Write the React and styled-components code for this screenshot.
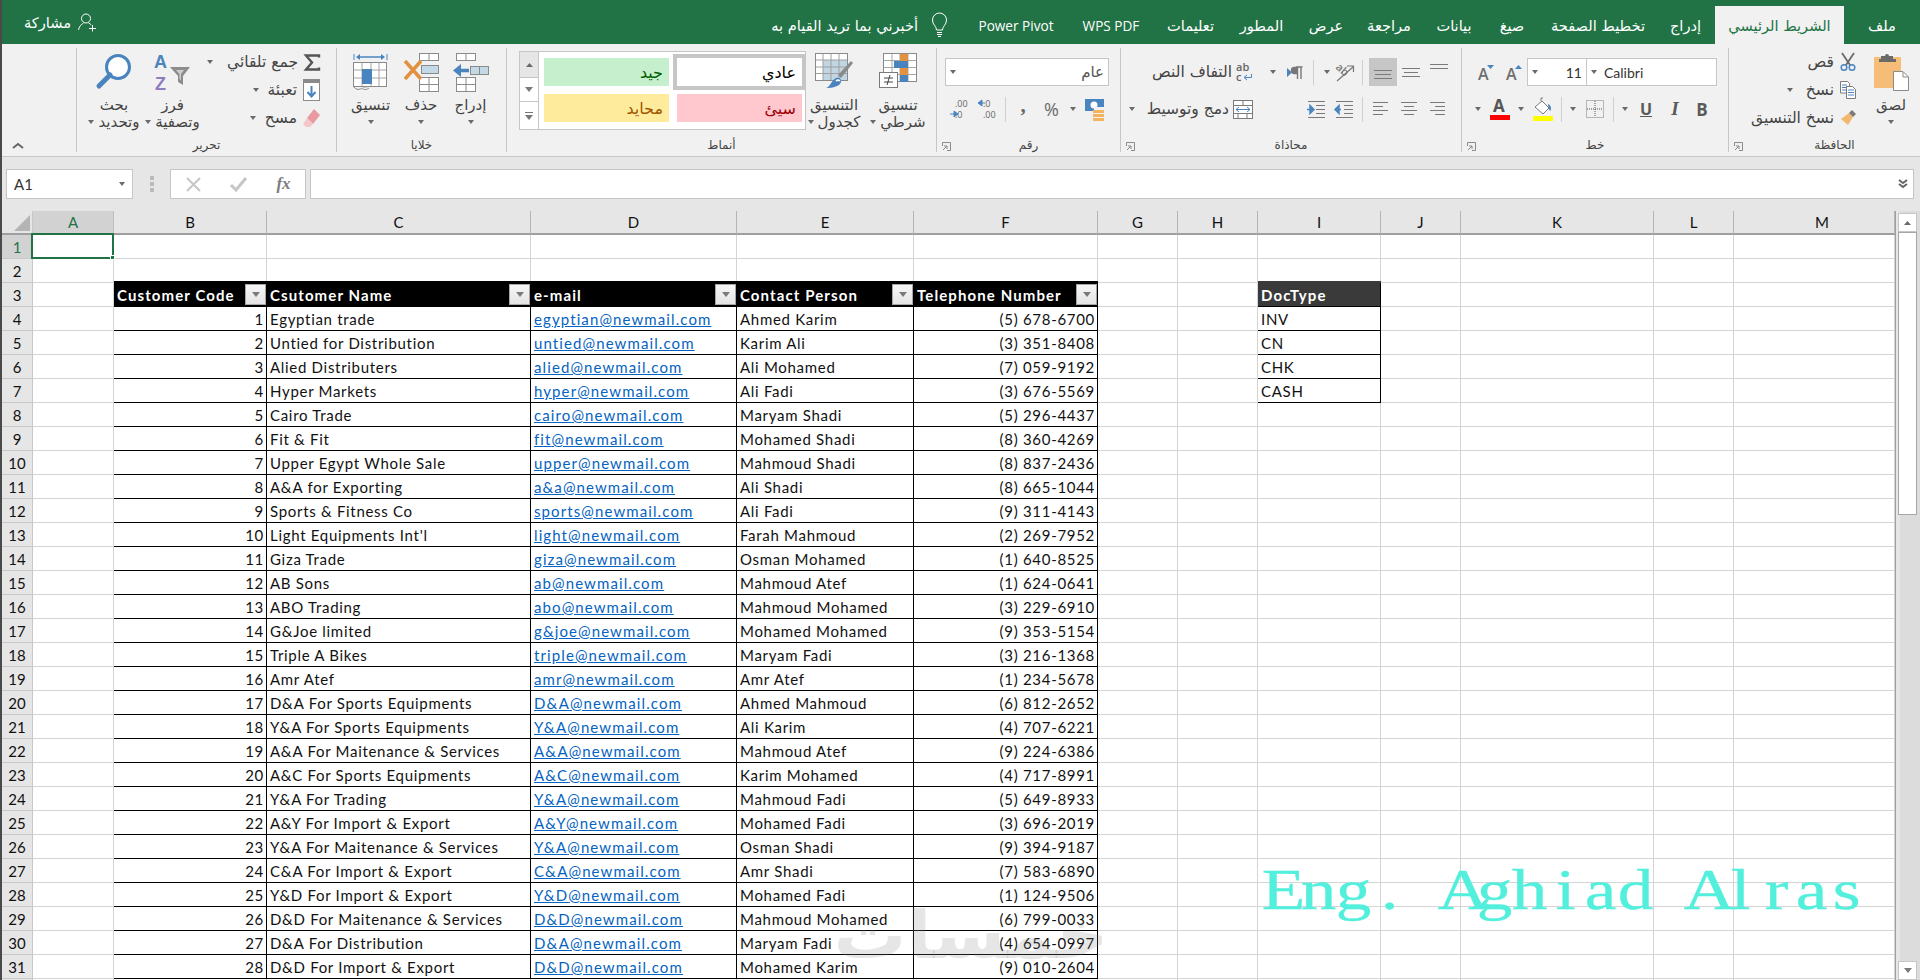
import React from 'react';
import styled, { createGlobalStyle } from 'styled-components';

const Global = createGlobalStyle`
  html, body { margin: 0; padding: 0; height: 100%; overflow: hidden; }
  body { background: #444; font-family: "Open Sans", "DejaVu Sans", sans-serif; }
  #root { height: 980px; overflow: hidden; }
  svg { overflow: visible; }
`;

const AR = '"DejaVu Sans", "Open Sans", sans-serif';
const CELLFONT = 'Lato, "Open Sans", sans-serif';
const BLUE = '#4a84bf';
const ORANGE = '#e2913f';

const Page = styled.div`
  position: relative; width: 1920px; height: 980px; padding-left: 2px; box-sizing: border-box;
  background: #4a4a4a; overflow: hidden; display: flex; flex-direction: column;
`;
const TitleBar = styled.div`
  height: 44px; background: #217346; display: flex; flex-direction: row-reverse; align-items: flex-end; flex: none;
`;
const Tab = styled.div`
  width: ${p => p.$w}px; height: 38px; display: flex; align-items: center; justify-content: center; white-space: nowrap;
  font-size: ${p => (p.$latin ? 13.6 : 14.6)}px; font-family: ${p => (p.$latin ? '"Open Sans", sans-serif' : AR)};
  color: ${p => (p.$active ? '#217346' : '#fff')}; background: ${p => (p.$active ? '#f1f1f1' : 'transparent')};
`;
const TellMe = styled.div`
  height: 38px; display: flex; align-items: center; gap: 13px; padding-right: 18px;
  color: #fff; font-size: 14.6px; font-family: ${AR};
`;
const Share = styled.div`
  margin-right: auto; height: 44px; padding-left: 22px; display: flex; align-items: center; gap: 7px;
  color: #fff; font-size: 14.6px; font-family: ${AR};
`;
const Ribbon = styled.div`
  flex: none; height: 113px; box-sizing: border-box; padding: 4px 0 0; display: flex; background: #f1f1f1;
  border-bottom: 1px solid #c8c8c8;
`;
const Collapse = styled.div`
  width: 74px; height: 104px; display: flex; align-items: flex-end; padding: 0 0 3px 10px; box-sizing: border-box;
`;
const Group = styled.div`
  position: relative; width: ${p => p.$w}px; height: 104px; box-sizing: border-box; flex: none;
  border-left: 1px solid #c6c6c6; display: flex; flex-direction: column;
`;
const GroupBody = styled.div`
  height: 90px; display: flex; padding-left: ${p => p.$pl || 0}px; box-sizing: border-box;
`;
const GroupLabel = styled.div`
  height: 14px; line-height: 14px; text-align: center; font-size: 12px; font-family: ${AR}; color: #444;
  padding-left: ${p => p.$pl || 0}px;
`;
const Launcher = styled.span`
  position: absolute; left: 5px; bottom: 1px; width: 9px; height: 9px; display: flex;
`;
const BigButton = styled.div`
  width: ${p => p.$w}px; flex: none; display: flex; flex-direction: column; align-items: center; padding-top: 5px; box-sizing: border-box;
`;
const BigIcon = styled.div`
  height: 43px; display: flex; align-items: flex-start; justify-content: center;
`;
const BigLine = styled.div`
  height: 17px; display: flex; align-items: center; justify-content: center; gap: 4px; white-space: nowrap;
  font-size: 15px; font-family: ${AR}; color: #444;
`;
const SmallCol = styled.div`
  flex: 1; display: flex; flex-direction: column; padding-right: ${p => p.$pr || 0}px;
`;
const SmallRow = styled.div`
  height: 28px; display: flex; align-items: center; justify-content: flex-end; gap: 6px; white-space: nowrap;
  font-size: 15.5px; font-family: ${AR}; color: #444;
`;
const AlignTextRow = styled(SmallRow)`
  height: ${p => (p.$second ? 22 : 28)}px; margin-top: ${p => (p.$second ? 12 : 0)}px; padding-right: 9px; gap: 4px;
`;
const Caret = styled.span`
  flex: none; width: 0; height: 0; margin-right: ${p => p.$mr || 0}px;
  border-left: 3.5px solid transparent; border-right: 3.5px solid transparent; border-top: 4px solid #6a6a6a;
`;
const TwoRows = styled.div`
  display: flex; flex-direction: column; padding-top: 10px; box-sizing: border-box; width: ${p => (p.$w ? p.$w + 'px' : 'auto')};
`;
const Row28 = styled.div`
  height: 28px; display: flex; align-items: center;
`;
const Row22 = styled.div`
  height: 22px; margin-top: 12px; display: flex; align-items: center;
`;
const Tool = styled.div`
  width: ${p => p.$w}px; height: ${p => (p.$on ? 28 : 22)}px; flex: none; display: flex; align-items: center; justify-content: center;
  background: ${p => (p.$on ? '#c6c6c6' : 'transparent')};
  font-family: "Liberation Sans", sans-serif; color: #5c5c5c;
`;
const Sep = styled.span`
  width: 1px; height: 25px; background: #d0d0d0; display: block;
`;
const LetterB = styled.span`
  font: bold 17px "Open Sans", sans-serif; color: #5a5a5a;
`;
const LetterI = styled(LetterB)`
  font-style: italic; font-family: "Liberation Serif", serif; font-size: 19px;
`;
const LetterU = styled(LetterB)`
  text-decoration: underline; font-size: 16px;
`;
const Percent = styled.span`
  font: 18px "Open Sans", sans-serif; color: #6a6a6a;
`;
const Comma = styled.span`
  font: bold 21px "Liberation Serif", serif; color: #6a6a6a; margin-top: -8px;
`;
const Combo = styled.div`
  width: ${p => p.$w}px; height: 28px; box-sizing: border-box; flex: none; background: #fff; border: 1px solid #c6c6c6;
  margin-left: ${p => p.$ml || 0}px; display: flex; align-items: center; padding: 0 4px 0 4px;
  font: 13.5px ${CELLFONT}; color: #333;
`;
const ComboText = styled.span`
  margin-left: ${p => (p.$end ? 'auto' : '7px')}; font-family: ${p => (p.$ar ? AR : CELLFONT)}; font-size: ${p => (p.$ar ? 15 : 14)}px;
  color: ${p => (p.$ar ? '#555' : '#333')};
`;
const Gallery = styled.div`
  width: 287px; height: 79px; margin-top: 3px; flex: none; box-sizing: border-box; background: #fff; border: 1px solid #c6c6c6; display: flex;
`;
const GalleryScroll = styled.div`
  width: 18px; flex: none; display: flex; flex-direction: column; border-right: 1px solid #c6c6c6;
`;
const GalleryBtn = styled.div`
  flex: ${p => p.$f}; display: flex; align-items: center; justify-content: center;
  background: ${p => (p.$dim ? '#e6e6e6' : '#fff')}; border-bottom: ${p => (p.$last ? 0 : 1)}px solid #c6c6c6;
`;
const StyleGrid = styled.div`
  display: grid; grid-template-columns: 125px 125px; grid-template-rows: 28px 28px; gap: 8px; padding: 6px 0 0 5px;
`;
const StyleCell = styled.div`
  background: ${p => p.$bg}; color: ${p => p.$fg}; font-size: 16px; font-family: ${AR};
  display: flex; align-items: center; justify-content: flex-end; padding-right: 6px;
  box-shadow: ${p => (p.$sel ? '0 0 0 4px #c6c6c6' : 'none')};
`;
const FormulaArea = styled.div`
  flex: none; height: 54px; background: #e6e6e6; display: flex; align-items: flex-start; padding: 12px 6px 0 4px; box-sizing: border-box;
`;
const NameBox = styled.div`
  width: 127px; height: 30px; box-sizing: border-box; background: #fff; border: 1px solid #c6c6c6; display: flex; align-items: center;
  justify-content: space-between; padding: 0 7px; font: 15px ${CELLFONT}; color: #333; flex: none;
`;
const Grip = styled.div`
  width: 37px; height: 30px; flex: none; display: flex; align-items: center; justify-content: center;
`;
const FxBox = styled.div`
  width: 136px; height: 30px; box-sizing: border-box; background: #fff; border: 1px solid #c6c6c6; flex: none; display: grid;
  grid-template-columns: repeat(3, 45px); align-items: center; justify-items: center;
`;
const FxText = styled.i`
  font: italic bold 17px "Liberation Serif", serif; color: #7d7d7d;
`;
const FormulaInput = styled.div`
  flex: 1; height: 30px; margin-left: 4px; box-sizing: border-box; background: #fff; border: 1px solid #c6c6c6;
  display: flex; align-items: center; justify-content: flex-end; padding-right: 5px;
`;
const SheetArea = styled.div`
  flex: 1; display: flex; min-height: 0; overflow: hidden;
`;
const Sheet = styled.div`
  width: 1893px; flex: none; display: grid; background: #fff; align-content: start;
  grid-template-columns: 31px 81px 153px 264px 206px 177px 184px 80px 80px 123px 80px 193px 80px 161px;
  grid-template-rows: 24px repeat(32, 24px); font: 15px ${CELLFONT}; letter-spacing: .7px; color: #111;
`;
const ColHead = styled.div`
  background: ${p => (p.$active ? '#d2d2d2' : '#e6e6e6')}; color: ${p => (p.$active ? '#217346' : '#111')};
  box-sizing: border-box; border-bottom: 2px solid #9f9f9f; border-right: 1px solid ${p => (p.$active ? '#c0c0c0' : '#b5b5b5')};
  display: flex; align-items: center; justify-content: center; font-size: 15px; padding-bottom: 1px; letter-spacing: 0;
  padding-left: ${p => p.$shift || 0}px;
`;
const Corner = styled(ColHead)`
  align-items: flex-end; justify-content: flex-end; padding: 0 2px 2px 0; border-right: 1px solid #c8c8c8;
`;
const RowHead = styled.div`
  background: ${p => (p.$active ? '#d2d2d2' : '#e6e6e6')}; color: ${p => (p.$active ? '#217346' : '#111')};
  box-sizing: border-box; border-bottom: 1px solid #c8c8c8; border-right: 1px solid #c8c8c8;
  display: flex; align-items: center; justify-content: center; font-size: 15px; letter-spacing: 0;
`;
const Cell = styled.div`
  position: relative; box-sizing: border-box; border-bottom: 1px solid #d4d4d4; border-right: 1px solid #d4d4d4;
`;
const Selection = styled.div`
  position: absolute; left: -2px; top: -2px; right: -1px; bottom: -1px; border: 2px solid #217346; z-index: 2;
  &::after { content: ''; position: absolute; right: -3px; bottom: -3px; width: 5px; height: 5px; background: #217346; border: 1px solid #fff; box-sizing: border-box; }
`;
const TableHead = styled.div`
  position: relative; box-sizing: border-box; background: ${p => p.$bg || '#000'}; color: #fff; font-weight: 700; letter-spacing: 1.1px;
  box-shadow: 0 -2px 0 ${p => p.$bg || '#000'}; display: flex; align-items: center; padding-left: 3px; white-space: nowrap;
  border: ${p => (p.$bg ? '1px solid #000' : 0)}; border-width: ${p => (p.$bg ? '0 1px 1px 0' : 0)};
`;
const FilterBtn = styled.span`
  position: absolute; right: 1px; top: 1px; width: 21px; height: 21px; box-sizing: border-box; background: linear-gradient(#f6f6f6, #e4e4e4);
  border: 1px solid #a6a6a6; display: flex; align-items: center; justify-content: center;
`;
const TableCell = styled.div`
  box-sizing: border-box; border-bottom: 1px solid #000; border-right: 1px solid #000; background: #fff;
  box-shadow: ${p => (p.$first ? '-1px 0 0 #000' : 'none')};
  display: flex; align-items: center; justify-content: ${p => (p.$right ? 'flex-end' : 'flex-start')}; padding: 0 2px 0 3px; white-space: nowrap;
`;
const Email = styled.a`
  color: #0563c1; text-decoration: underline; letter-spacing: 1.1px;
`;
const Scrollbar = styled.div`
  flex: 1; background: #dcdcdc; display: flex; flex-direction: column; align-items: center; padding: 2px 1px 0 0; box-sizing: border-box;
  box-shadow: inset 4px 0 0 #e6e6e6; border-left: 1px solid #9f9f9f; height: 100%;
`;
const ScrollBtn = styled.div`
  width: 19px; height: 19px; box-sizing: border-box; background: #fff; border: 1px solid #c6c6c6; flex: none; display: flex; align-items: center; justify-content: center;
  margin-top: ${p => (p.$auto ? 'auto' : 0)};
`;
const ScrollThumb = styled.div`
  width: 19px; height: 283px; box-sizing: border-box; background: #fff; border: 1px solid #a6a6a6; flex: none;
`;
const Signature = styled.div`
  position: absolute; left: 1266px; top: 857px; display: flex; color: #52efdc; font: 57px "Liberation Serif", serif; pointer-events: none; z-index: 3;
  -webkit-text-stroke: .3px #52efdc;
`;
const SigChar = styled.span`
  width: 35.2px; text-align: center; flex: none; display: inline-block; transform: scaleX(1.25);
`;
const Watermark = styled.div`
  position: absolute; left: 845px; top: 896px; width: 228px; text-align: center; pointer-events: none; z-index: 3;
  font: bold 66px ${AR}; color: rgba(130,130,130,.2); line-height: 80px; transform: scaleX(1.1);
`;

/* ---------- icons ---------- */
const Up = () => <svg width="7" height="4"><path d="M0 4L3.5 0 7 4z" fill="#6a6a6a" /></svg>;
const DownSmall = () => <svg width="8" height="5"><path d="M0 0L4 5 8 0z" fill="#7a7a7a" /></svg>;
const LauncherIcon = () => (
  <svg width="9" height="9" viewBox="0 0 9 9" fill="none" stroke="#8a8a8a"><path d="M.5 4V.5H8.5V8.5H5M1 8L5 4M2 4h3v3" /></svg>
);
const ShareIcon = () => (
  <svg width="19" height="19" viewBox="0 0 19 19" fill="none" stroke="#fff"><circle cx="8" cy="5.5" r="4.5" /><path d="M.5 17c1-5 4-6 5-7M10.5 10c1 .4 2 1 2.8 2M14.5 12v6.5M11 15.5h7" /></svg>
);
const Bulb = () => (
  <svg width="17" height="24" viewBox="0 0 17 24" fill="none" stroke="#fff"><path d="M5.5 17c0-4-4-5-4-10a7 7 0 0114 0c0 5-4 6-4 10zM6 19.5h5M6 21.5h5M7 23.5h3" /></svg>
);
const Search = () => (
  <svg width="36" height="36" viewBox="0 0 36 36" fill="none"><circle cx="22" cy="14" r="11.5" fill="#fff" stroke={BLUE} strokeWidth="3" /><path d="M14 22L3 33" stroke={BLUE} strokeWidth="5" strokeLinecap="round" /></svg>
);
const SortIcon = () => (
  <svg width="37" height="40" viewBox="0 0 37 40"><text x="0" y="15" fontFamily="Liberation Sans" fontWeight="bold" fontSize="18" fill={BLUE}>A</text><text x="1" y="37" fontFamily="Liberation Sans" fontWeight="bold" fontSize="18" fill="#8f7cc0">Z</text><path d="M16 14H36L29 23V32L24 29V23Z" fill="#8d8d8d" /><path d="M22 17H30L27 21V27L25.500 26V21Z" fill="#cfcfcf" /></svg>
);
const Sigma = () => (
  <svg width="16" height="17" viewBox="0 0 16 17" fill="none" stroke="#555" strokeWidth="2.400"><path d="M15 3.500V1.500H2L8 8.500 2 15.500H15V13.500" /></svg>
);
const FillIcon = () => (
  <svg width="17" height="22" viewBox="0 0 17 22"><rect x=".5" y=".5" width="16" height="21" fill="#fff" stroke="#8a8a8a" /><rect x="1" y="1" width="15" height="3" fill="#8a8a8a" /><path d="M8.500 7v9M4.500 13l4 4.500 4-4.500" fill="none" stroke={BLUE} strokeWidth="2" /></svg>
);
const Eraser = () => (
  <svg width="17" height="19" viewBox="0 0 17 19"><path d="M11 0l6 6-7 9-6-6z" fill="#e99aa0" /><path d="M4 9l6 6-3 3-4 0-3-3z" fill="#f4c8cb" /></svg>
);
const box = '#8a8a8a';
const FormatIcon = () => (
  <svg width="36" height="38" viewBox="0 0 36 38" fill="none">
    <path d="M1 1v6M34 1v6" stroke={BLUE} /><path d="M5 4H30" stroke={BLUE} strokeWidth="1.500" /><path d="M3 4l4-3v6zM32 4l-4-3v6z" fill={BLUE} />
    <rect x=".5" y="9.500" width="33" height="24" fill="#fff" stroke={box} />
    <path d="M9 10V33M18 10V33M26 10V33M1 17H33M1 25H33" stroke="#a5a5a5" />
    <rect x="9" y="16" width="10" height="15" fill={BLUE} />
    <path d="M1 34c2 3 6 3 8 1 1 2 5 2 7 0M10 34l6-.5" stroke="#8a8a8a" />
  </svg>
);
const DeleteIcon = () => (
  <svg width="36" height="38" viewBox="0 0 36 38" fill="none" stroke={box}>
    <rect x="16.500" y=".5" width="19" height="7" fill="#fff" />
    <path d="M26 1V7" /><rect x="18.500" y="12.500" width="17" height="8" fill="#c3d9e6" />
    <rect x="16.500" y="24.500" width="19" height="14" fill="#fff" /><path d="M26 25V38M17 31.500H35" />
    <path d="M2 8L18 26M18 8L2 26" stroke={ORANGE} strokeWidth="3.500" />
  </svg>
);
const InsertIcon = () => (
  <svg width="36" height="38" viewBox="0 0 36 38" fill="none" stroke={box}>
    <rect x="3.500" y=".5" width="19" height="7" fill="#fff" /><path d="M13 1V7" />
    <rect x="17.500" y="13.500" width="18" height="8" fill="#c3d9e6" /><path d="M26.500 14V21" />
    <rect x="3.500" y="24.500" width="19" height="14" fill="#fff" /><path d="M13 25V38M4 31.500H22" />
    <path d="M16 17.500H6" stroke={BLUE} strokeWidth="3.500" /><path d="M0 17.500L8 11V24Z" fill={BLUE} stroke="none" />
  </svg>
);
const CondIcon = () => (
  <svg width="38" height="36" viewBox="0 0 38 36" fill="none">
    <rect x="4.500" y=".5" width="33" height="28" fill="#fff" stroke={box} />
    <path d="M13 1V28M21 1V28M29 1V28M5 7.500H37M5 14.500H37M5 21.500H37" stroke="#a5a5a5" />
    <rect x="21" y="1" width="8" height="7" fill={ORANGE} /><rect x="15" y="8" width="14" height="7" fill={BLUE} /><rect x="21" y="15" width="8" height="7" fill={ORANGE} /><rect x="21" y="22" width="8" height="7" fill={BLUE} />
    <rect x=".5" y="19.500" width="18" height="15" fill="#fff" stroke="#7a7a7a" /><path d="M5 25H14M5 29H14M11 22L8 32" stroke="#444" />
  </svg>
);
const TableFmtIcon = () => (
  <svg width="38" height="36" viewBox="0 0 38 36" fill="none">
    <rect x=".5" y=".5" width="32" height="27" fill="#fff" stroke={box} />
    <rect x="8" y="7" width="24" height="20" fill="#c0d6e2" />
    <path d="M8 1V27M16 1V27M24 1V27M1 7H32M1 14H32M1 20.500H32" stroke="#a0a0a0" />
    <path d="M23 22L36 8l2 2-12 15z" fill="#8a8a8a" />
    <path d="M11 35c4-1 5-7 10-10 3-1 6 1 5 4-1 4-8 6-15 6z" fill={BLUE} /><path d="M21 28a3 3 0 014 0" stroke="#fff" strokeWidth="1.500" />
  </svg>
);
const Lines = ({ rows, w = 18, h = 18, color = '#7a7a7a' }) => (
  <svg width={w} height={h} viewBox={`0 0 ${w} ${h}`} fill="none" stroke={color}>
    {rows.map(([a, b, y], i) => <path key={i} d={`M${a} ${y}.5H${b}`} />)}
  </svg>
);
const IndentIcon = ({ flip }) => (
  <svg width="19" height="17" viewBox="0 0 19 17" fill="none" stroke="#7a7a7a">
    <path d="M1 .5H18M9 4.500H18M9 8.500H18M9 12.500H18M1 16.500H18" />
    {flip ? <path d="M6 8.500H2M0 8.500L4 4.500V12.500Z" fill={BLUE} stroke={BLUE} strokeWidth="1.500" /> : <path d="M0 8.500H5M7 8.500L3 4.500V12.500Z" fill={BLUE} stroke={BLUE} strokeWidth="1.500" />}
  </svg>
);
const ParaIcon = () => (
  <svg width="16" height="13" viewBox="0 0 16 13"><path d="M0 2L5 6.500 0 11z" fill={BLUE} /><path d="M10.500 1.500H7.500a3 3 0 000 6h3M10.500 1V13M14 1V13M9 1H15.500" fill="#777" stroke="#777" strokeWidth="1.400" /></svg>
);
const Orient = () => (
  <svg width="20" height="20" viewBox="0 0 20 20" fill="none"><text x="1" y="10" transform="rotate(40 6 8)" fontFamily="Open Sans" fontSize="11" fontWeight="600" fill="#777">ab</text><path d="M3 19L19 5M13 4h6.500v6" stroke="#777" strokeWidth="1.200" /></svg>
);
const WrapIcon = () => (
  <svg width="17" height="20" viewBox="0 0 17 20" fill="none"><text x="0" y="9" fontFamily="Open Sans" fontWeight="600" fontSize="11" fill="#666">ab</text><text x="0" y="19" fontFamily="Open Sans" fontWeight="600" fontSize="11" fill="#666">c</text><path d="M15.500 12v3.500H9M11 13l-3 2.500 3 2.500" stroke={BLUE} /></svg>
);
const MergeIcon = () => (
  <svg width="20" height="19" viewBox="0 0 20 19" fill="none"><rect x=".5" y=".5" width="19" height="18" fill="#fff" stroke="#7a7a7a" /><path d="M1 5.500H19M1 13.500H19M10 1V5M5 14V18M14 14V18" stroke="#7a7a7a" /><path d="M3 9.500H17M6 7L3 9.500 6 12M14 7L17 9.500 14 12" stroke={BLUE} /></svg>
);
const AccIcon = () => (
  <svg width="20" height="23" viewBox="0 0 20 23"><rect x="0" y="1" width="19" height="12" fill={BLUE} /><circle cx="9" cy="7" r="3.500" fill="#fff" /><rect x="9" y="9" width="10" height="4" fill="#f1f1f1" /><path d="M8 12h11v3H8zM8 16h11v3H8zM8 20h11v3H8z" fill="#f2b460" /></svg>
);
const DecIcon = ({ more }) => (
  <svg width="18" height="22" viewBox="0 0 18 22">
    <text x="5" y="9" fontFamily="Open Sans" fontSize="9" fill="#666">{more ? '.00' : '.0'}</text>
    <text x="5" y="20" fontFamily="Open Sans" fontSize="9" fill="#666">{more ? '.0' : '.00'}</text>
    <path d={more ? 'M0 16H6M8 16L4 13V19Z' : 'M1 5H7M0 5L4 2V8Z'} fill={BLUE} stroke={BLUE} />
  </svg>
);
const AGrow = ({ down }) => (
  <svg width="16" height="17" viewBox="0 0 16 17"><text x="0" y="16" fontFamily="Open Sans" fontWeight="600" fontSize="16" fill="#6e6e6e">A</text><path d={down ? 'M9 1H16L12.500 5Z' : 'M9 5L12.500 1 16 5Z'} fill={BLUE} /></svg>
);
const FontColor = () => (
  <svg width="20" height="22" viewBox="0 0 20 22"><text x="3" y="14" fontFamily="Open Sans" fontWeight="700" fontSize="17" fill="#555">A</text><rect y="17" width="20" height="5" fill="#f00" /></svg>
);
const FillColor = () => (
  <svg width="20" height="23" viewBox="0 0 20 23" fill="none"><path d="M2 9L9 3l7 7-6 6z" fill="#fff" stroke="#7a7a7a" /><path d="M8 3V0h2" stroke="#7a7a7a" /><path d="M15 6c3 1 4 5 2 7-1-2-2-4-2-7z" fill={BLUE} /><rect y="18" width="20" height="5" fill="#ff0" /></svg>
);
const BorderIcon = () => (
  <svg width="18" height="18" viewBox="0 0 18 18" fill="none" stroke="#7a7a7a" strokeDasharray="1 1"><rect x=".5" y=".5" width="17" height="17" /><path d="M9 1V17M1 9H17" stroke="#555" /></svg>
);
const Paste = () => (
  <svg width="35" height="38" viewBox="0 0 35 38">
    <rect x="0" y="4" width="27" height="31" rx="1" fill="#f5bd77" />
    <path d="M7 7V3h4a2 2 0 014 0h4V7z" fill="#6a6a6a" /><rect x="5" y="6" width="17" height="3" fill="#6a6a6a" />
    <path d="M19.500 18.500H29l5.500 5.500V37.500H19.500z" fill="#fff" stroke="#8a8a8a" /><path d="M29 19v5h5" fill="none" stroke="#8a8a8a" />
  </svg>
);
const Scissors = () => (
  <svg width="16" height="18" viewBox="0 0 16 18" fill="none"><path d="M2 0l8 12M14 0L6 12" stroke="#6a6a6a" strokeWidth="1.800" /><circle cx="4" cy="14.500" r="2.800" stroke={BLUE} strokeWidth="1.500" /><circle cx="12" cy="14.500" r="2.800" stroke={BLUE} strokeWidth="1.500" /></svg>
);
const Copy = () => (
  <svg width="16" height="18" viewBox="0 0 16 18" fill="none" stroke="#7a7a7a"><path d="M.5.500h7l2 2V12H.5z" fill="#fff" /><path d="M2 4h5M2 6.500h5M2 9h5" stroke={BLUE} /><path d="M6.500 5.500h6l3 3v9h-9z" fill="#fff" /><path d="M8 9h6M8 11.500h6M8 14h6" stroke={BLUE} /></svg>
);
const Painter = () => (
  <svg width="16" height="16" viewBox="0 0 16 16"><path d="M9 3L13 7 8 15 1 9z" fill="#f2b870" /><path d="M9 3l3-3 4 4-3 3z" fill="#7a7a7a" /></svg>
);
const XIcon = () => <svg width="15" height="15" fill="none" stroke="#c6c6c6" strokeWidth="2"><path d="M1 1L14 14M14 1L1 14" /></svg>;
const CheckIcon = () => <svg width="17" height="15" fill="none" stroke="#c6c6c6" strokeWidth="3"><path d="M1 8l5 5L16 1" /></svg>;
const GripDots = () => <svg width="4" height="16" fill="#bbb"><rect width="4" height="4" /><rect y="6" width="4" height="4" /><rect y="12" width="4" height="4" /></svg>;
const DoubleDown = () => <svg width="10" height="10" fill="none" stroke="#666" strokeWidth="2"><path d="M1 1l4 3 4-3M1 5l4 3 4-3" /></svg>;
const GalleryMore = () => <svg width="8" height="8" fill="#777"><rect width="8" height="1" /><path d="M0 3h8L4 8z" /></svg>;

/* ---------- data ---------- */
const tabs = [
  ['ملف', 76], ['الشريط الرئيسي', 129, true], ['إدراج', 59], ['تخطيط الصفحة', 116], ['صيغ', 56], ['بيانات', 60],
  ['مراجعة', 70], ['عرض', 56], ['المطور', 73], ['تعليمات', 69], ['WPS PDF', 90], ['Power Pivot', 100],
];
const cols = [['A', 1], ['B'], ['C'], ['D'], ['E'], ['F'], ['G'], ['H'], ['I'], ['J'], ['K'], ['L'], ['M', 0, 16]];
const people = [
  ['Egyptian trade', 'egyptian', 'Ahmed Karim', '(5) 678-6700'],
  ['Untied for Distribution', 'untied', 'Karim Ali', '(3) 351-8408'],
  ['Alied Distributers', 'alied', 'Ali Mohamed', '(7) 059-9192'],
  ['Hyper Markets', 'hyper', 'Ali Fadi', '(3) 676-5569'],
  ['Cairo Trade', 'cairo', 'Maryam Shadi', '(5) 296-4437'],
  ['Fit & Fit', 'fit', 'Mohamed Shadi', '(8) 360-4269'],
  ['Upper Egypt Whole Sale', 'upper', 'Mahmoud Shadi', '(8) 837-2436'],
  ['A&A for Exporting', 'a&a', 'Ali Shadi', '(8) 665-1044'],
  ['Sports & Fitness Co', 'sports', 'Ali Fadi', '(9) 311-4143'],
  ["Light Equipments Int'l", 'light', 'Farah Mahmoud', '(2) 269-7952'],
  ['Giza Trade', 'giza', 'Osman Mohamed', '(1) 640-8525'],
  ['AB Sons', 'ab', 'Mahmoud Atef', '(1) 624-0641'],
  ['ABO Trading', 'abo', 'Mahmoud Mohamed', '(3) 229-6910'],
  ['G&Joe limited', 'g&joe', 'Mohamed Mohamed', '(9) 353-5154'],
  ['Triple A Bikes', 'triple', 'Maryam Fadi', '(3) 216-1368'],
  ['Amr Atef', 'amr', 'Amr Atef', '(1) 234-5678'],
  ['D&A For Sports Equipments', 'D&A', 'Ahmed Mahmoud', '(6) 812-2652'],
  ['Y&A For Sports Equipments', 'Y&A', 'Ali Karim', '(4) 707-6221'],
  ['A&A For Maitenance & Services', 'A&A', 'Mahmoud Atef', '(9) 224-6386'],
  ['A&C For Sports Equipments', 'A&C', 'Karim Mohamed', '(4) 717-8991'],
  ['Y&A For Trading', 'Y&A', 'Mahmoud Fadi', '(5) 649-8933'],
  ['A&Y For Import & Export', 'A&Y', 'Mohamed Fadi', '(3) 696-2019'],
  ['Y&A For Maitenance & Services', 'Y&A', 'Osman Shadi', '(9) 394-9187'],
  ['C&A For Import & Export', 'C&A', 'Amr Shadi', '(7) 583-6890'],
  ['Y&D For Import & Export', 'Y&D', 'Mohamed Fadi', '(1) 124-9506'],
  ['D&D For Maitenance & Services', 'D&D', 'Mahmoud Mohamed', '(6) 799-0033'],
  ['D&A For Distribution', 'D&A', 'Maryam Fadi', '(4) 654-0997'],
  ['D&D For Import & Export', 'D&D', 'Mohamed Karim', '(9) 010-2604'],
];
const heads = ['Customer Code', 'Csutomer Name', 'e-mail', 'Contact Person', 'Telephone Number'];
const docTypes = ['INV', 'CN', 'CHK', 'CASH'];

const Blank = () => <Cell />;
const Blanks = ({ n }) => Array.from({ length: n }, (_, i) => <Blank key={i} />);

function SheetRow({ r }) {
  const p = r >= 4 && r <= 31 ? people[r - 4] : null;
  const doc = r >= 4 && r <= 7 ? docTypes[r - 4] : null;
  return (
    <>
      <RowHead $active={r === 1}>{r <= 31 ? r : ''}</RowHead>
      <Cell>{r === 1 && <Selection />}</Cell>
      {r === 3 && heads.map(h => (
        <TableHead key={h}>{h}<FilterBtn><DownSmall /></FilterBtn></TableHead>
      ))}
      {p && (
        <>
          <TableCell $first $right>{r - 3}</TableCell>
          <TableCell>{p[0]}</TableCell>
          <TableCell><Email>{p[1]}@newmail.com</Email></TableCell>
          <TableCell>{p[2]}</TableCell>
          <TableCell $right>{p[3]}</TableCell>
        </>
      )}
      {(r < 3 || r > 31) && <Blanks n={5} />}
      <Blank /><Blank />
      {r === 3 ? <TableHead $bg="#3a3a3a">DocType</TableHead> : doc ? <TableCell $first>{doc}</TableCell> : <Blank />}
      <Blanks n={4} />
    </>
  );
}

export default function App() {
  return (
    <Page>
      <Global />
      <TitleBar>
        {tabs.map(([t, w, a]) => <Tab key={t} $w={w} $active={a} $latin={/^[A-Z]/.test(t)}>{t}</Tab>)}
        <TellMe><span>أخبرني بما تريد القيام به</span><Bulb /></TellMe>
        <Share><span>مشاركة</span><ShareIcon /></Share>
      </TitleBar>

      <Ribbon>
        <Collapse><svg width="12" height="7" fill="none" stroke="#666" strokeWidth="2"><path d="M1 6l5-4 5 4" /></svg></Collapse>

        <Group $w={260}>
          <GroupBody $pl={8}>
            <BigButton $w={58}>
              <BigIcon><Search /></BigIcon>
              <BigLine>بحث</BigLine>
              <BigLine><Caret /><span>وتحديد</span></BigLine>
            </BigButton>
            <BigButton $w={59}>
              <BigIcon><SortIcon /></BigIcon>
              <BigLine>فرز</BigLine>
              <BigLine><Caret /><span>وتصفية</span></BigLine>
            </BigButton>
            <SmallCol $pr={16}>
              <SmallRow><Caret $mr={8} /><span>جمع تلقائي</span><Sigma /></SmallRow>
              <SmallRow><Caret $mr={3} /><span>تعبئة</span><FillIcon /></SmallRow>
              <SmallRow><Caret $mr={3} /><span>مسح</span><Eraser /></SmallRow>
            </SmallCol>
          </GroupBody>
          <GroupLabel>تحرير</GroupLabel>
        </Group>

        <Group $w={170}>
          <GroupBody $pl={8}>
            <BigButton $w={51}><BigIcon><FormatIcon /></BigIcon><BigLine>تنسيق</BigLine><BigLine><Caret /></BigLine></BigButton>
            <BigButton $w={50}><BigIcon><DeleteIcon /></BigIcon><BigLine>حذف</BigLine><BigLine><Caret /></BigLine></BigButton>
            <BigButton $w={49}><BigIcon><InsertIcon /></BigIcon><BigLine>إدراج</BigLine><BigLine><Caret /></BigLine></BigButton>
          </GroupBody>
          <GroupLabel>خلايا</GroupLabel>
        </Group>

        <Group $w={430}>
          <GroupBody $pl={12}>
            <Gallery>
              <GalleryScroll>
                <GalleryBtn $f={26} $dim><Up /></GalleryBtn>
                <GalleryBtn $f={24}><DownSmall /></GalleryBtn>
                <GalleryBtn $f={28} $last><GalleryMore /></GalleryBtn>
              </GalleryScroll>
              <StyleGrid>
                <StyleCell $bg="#c6efce" $fg="#006100">جيد</StyleCell>
                <StyleCell $bg="#fff" $fg="#000" $sel>عادي</StyleCell>
                <StyleCell $bg="#ffeb9c" $fg="#9c5700">محايد</StyleCell>
                <StyleCell $bg="#ffc7ce" $fg="#9c0006">سيئ</StyleCell>
              </StyleGrid>
            </Gallery>
            <BigButton $w={56}>
              <BigIcon><TableFmtIcon /></BigIcon>
              <BigLine>التنسيق</BigLine>
              <BigLine><Caret /><span>كجدول</span></BigLine>
            </BigButton>
            <BigButton $w={72}>
              <BigIcon><CondIcon /></BigIcon>
              <BigLine>تنسيق</BigLine>
              <BigLine><Caret /><span>شرطي</span></BigLine>
            </BigButton>
          </GroupBody>
          <GroupLabel>أنماط</GroupLabel>
        </Group>

        <Group $w={184}>
          <GroupBody $pl={8}>
            <TwoRows>
              <Row28><Combo $w={164}><Caret /><ComboText $end $ar>عام</ComboText></Combo></Row28>
              <Row22>
                <Tool $w={28}><DecIcon more /></Tool>
                <Tool $w={28}><DecIcon /></Tool>
                <Tool $w={8}><Sep /></Tool>
                <Tool $w={28}><Comma>,</Comma></Tool>
                <Tool $w={29}><Percent>%</Percent></Tool>
                <Tool $w={14}><Caret /></Tool>
                <Tool $w={29}><AccIcon /></Tool>
              </Row22>
            </TwoRows>
          </GroupBody>
          <GroupLabel>رقم</GroupLabel>
          <Launcher><LauncherIcon /></Launcher>
        </Group>

        <Group $w={341}>
          <GroupBody>
            <TwoRows $w={141}>
              <AlignTextRow><span>التفاف النص</span><WrapIcon /></AlignTextRow>
              <AlignTextRow $second><Caret $mr={8} /><span>دمج وتوسيط</span><MergeIcon /></AlignTextRow>
            </TwoRows>
            <TwoRows>
              <Row28>
                <Tool $w={22}><Caret /></Tool>
                <Tool $w={21}><ParaIcon /></Tool>
                <Tool $w={16}><Sep /></Tool>
                <Tool $w={12}><Caret /></Tool>
                <Tool $w={22}><Orient /></Tool>
                <Tool $w={14}><Sep /></Tool>
                <Tool $w={28} $on><Lines rows={[[0, 18, 9], [1, 17, 13], [0, 18, 17]]} h={22} /></Tool>
                <Tool $w={28}><Lines rows={[[0, 18, 2], [2, 16, 6], [0, 18, 10]]} h={13} /></Tool>
                <Tool $w={28}><Lines rows={[[0, 18, 0], [0, 18, 4]]} h={16} /></Tool>
              </Row28>
              <Row22>
                <Tool $w={40} />
                <Tool $w={28}><IndentIcon /></Tool>
                <Tool $w={28}><IndentIcon flip /></Tool>
                <Tool $w={8}><Sep /></Tool>
                <Tool $w={29}><Lines rows={[[0, 15, 0], [0, 10, 4], [0, 15, 8], [0, 10, 12]]} h={14} w={15} /></Tool>
                <Tool $w={28}><Lines rows={[[0, 16, 0], [3, 13, 4], [0, 16, 8], [3, 13, 12]]} h={14} w={16} /></Tool>
                <Tool $w={28}><Lines rows={[[0, 15, 0], [5, 15, 4], [0, 15, 8], [5, 15, 12]]} h={14} w={15} /></Tool>
              </Row22>
            </TwoRows>
          </GroupBody>
          <GroupLabel>محاذاة</GroupLabel>
          <Launcher><LauncherIcon /></Launcher>
        </Group>

        <Group $w={267}>
          <GroupBody $pl={10}>
            <TwoRows>
              <Row28>
                <Tool $w={28}><AGrow down /></Tool>
                <Tool $w={27}><AGrow /></Tool>
                <Combo $w={60}><Caret /><ComboText $end>11</ComboText></Combo>
                <Combo $w={131} $ml={-1}><Caret /><ComboText>Calibri</ComboText></Combo>
              </Row28>
              <Row22>
                <Tool $w={12}><Caret /></Tool>
                <Tool $w={32}><FontColor /></Tool>
                <Tool $w={10}><Caret /></Tool>
                <Tool $w={34}><FillColor /></Tool>
                <Tool $w={2}><Sep /></Tool>
                <Tool $w={22}><Caret /></Tool>
                <Tool $w={21}><BorderIcon /></Tool>
                <Tool $w={16}><Sep /></Tool>
                <Tool $w={8}><Caret /></Tool>
                <Tool $w={34}><LetterU>U</LetterU></Tool>
                <Tool $w={24}><LetterI>I</LetterI></Tool>
                <Tool $w={30}><LetterB>B</LetterB></Tool>
              </Row22>
            </TwoRows>
          </GroupBody>
          <GroupLabel>خط</GroupLabel>
          <Launcher><LauncherIcon /></Launcher>
        </Group>

        <Group $w={192}>
          <GroupBody>
            <SmallCol $pr={6}>
              <SmallRow><span>قص</span><Scissors /></SmallRow>
              <SmallRow><Caret $mr={7} /><span>نسخ</span><Copy /></SmallRow>
              <SmallRow><span>نسخ التنسيق</span><Painter /></SmallRow>
            </SmallCol>
            <BigButton $w={58}>
              <BigIcon><Paste /></BigIcon>
              <BigLine>لصق</BigLine>
              <BigLine><Caret /></BigLine>
            </BigButton>
          </GroupBody>
          <GroupLabel $pl={20}>الحافظة</GroupLabel>
          <Launcher><LauncherIcon /></Launcher>
        </Group>
      </Ribbon>

      <FormulaArea>
        <NameBox><span>A1</span><Caret /></NameBox>
        <Grip><GripDots /></Grip>
        <FxBox><XIcon /><CheckIcon /><FxText>fx</FxText></FxBox>
        <FormulaInput><DoubleDown /></FormulaInput>
      </FormulaArea>

      <SheetArea>
        <Sheet>
          <Corner><svg width="16" height="16"><path d="M0 16L16 0V16Z" fill="#b4b4b4" /></svg></Corner>
          {cols.map(([c, a, s]) => <ColHead key={c} $active={a} $shift={s}>{c}</ColHead>)}
          {Array.from({ length: 32 }, (_, i) => <SheetRow key={i} r={i + 1} />)}
        </Sheet>
        <Scrollbar>
          <ScrollBtn><Up /></ScrollBtn>
          <ScrollThumb />
          <ScrollBtn $auto><DownSmall /></ScrollBtn>
        </Scrollbar>
      </SheetArea>

      <Signature>{'Eng. Aghiad Alras'.split('').map((c, i) => <SigChar key={i}>{c === ' ' ? '\u00a0' : c}</SigChar>)}</Signature>
      <Watermark>خمسات</Watermark>
    </Page>
  );
}
